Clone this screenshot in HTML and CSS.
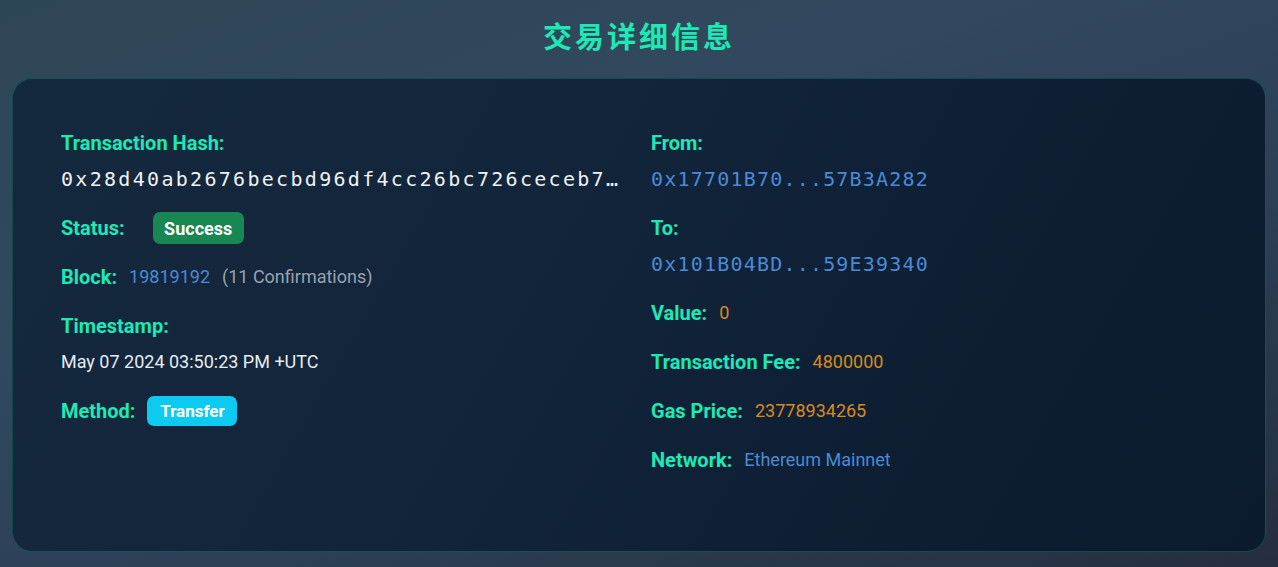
FILE: index.html
```html
<!DOCTYPE html>
<html lang="zh">
<head>
<meta charset="utf-8">
<title>交易详细信息</title>
<link rel="stylesheet" href="styles.css">
</head>
<body>
<div class="page">
  <h1 class="title">交易详细信息</h1>
  <section class="card">
    <div class="col">
      <div class="item stacked">
        <div class="label">Transaction Hash:</div>
        <div class="hash">0x28d40ab2676becbd96df4cc26bc726ceceb7c3e1a5f0d29b84e6f7a1c2d3e4f5</div>
      </div>
      <div class="item row">
        <span class="label">Status:</span>
        <span class="badge badge-success">Success</span>
      </div>
      <div class="item row">
        <span class="label">Block:</span>
        <span class="val blue">19819192</span>
        <span class="val muted">(11 Confirmations)</span>
      </div>
      <div class="item stacked">
        <div class="label">Timestamp:</div>
        <div class="val light">May 07 2024 03:50:23 PM +UTC</div>
      </div>
      <div class="item row">
        <span class="label">Method:</span>
        <span class="badge badge-info">Transfer</span>
      </div>
    </div>
    <div class="col">
      <div class="item stacked">
        <div class="label">From:</div>
        <div class="addr">0x17701B70...57B3A282</div>
      </div>
      <div class="item stacked">
        <div class="label">To:</div>
        <div class="addr">0x101B04BD...59E39340</div>
      </div>
      <div class="item row">
        <span class="label">Value:</span>
        <span class="val orange">0</span>
      </div>
      <div class="item row">
        <span class="label">Transaction Fee:</span>
        <span class="val orange">4800000</span>
      </div>
      <div class="item row">
        <span class="label">Gas Price:</span>
        <span class="val orange">23778934265</span>
      </div>
      <div class="item row">
        <span class="label">Network:</span>
        <span class="val blue">Ethereum Mainnet</span>
      </div>
    </div>
  </section>
</div>
</body>
</html>
```
FILE: styles.css
```css
* { box-sizing: border-box; }
html, body { height: 100%; }
body {
  margin: 0;
  font-family: Roboto, "Liberation Sans", sans-serif;
  background: linear-gradient(160deg, #2d4657 0%, #32485e 35%, #2b3f55 65%, #252e40 100%);
  color: #e6ecf2;
  overflow: hidden;
}
.page {
  padding: 15px 12px 0;
}
.title {
  margin: 0 0 23px;
  text-align: center;
  font-family: "Noto Sans CJK SC", sans-serif;
  font-weight: 700;
  font-size: 29px;
  line-height: 40px;
  letter-spacing: 3px;
  color: #1de9b6;
}
.card {
  display: grid;
  grid-template-columns: 1fr 1fr;
  column-gap: 24px;
  padding: 48px 48px 75px;
  border: 1px solid rgba(29, 233, 182, 0.22);
  border-radius: 20px;
  background: linear-gradient(120deg, #15293e 0%, #12243a 45%, #0d1e33 75%, #0b1b2d 100%);
}
.col {
  display: flex;
  flex-direction: column;
  gap: 17px;
  min-width: 0;
}
.item.stacked {
  display: flex;
  flex-direction: column;
  gap: 4px;
  min-width: 0;
}
.item.row {
  display: flex;
  align-items: center;
  gap: 12px;
  height: 32px;
}
.label {
  font-weight: 700;
  font-size: 20px;
  line-height: 32px;
  color: #1de9b6;
  white-space: nowrap;
}
.val {
  font-size: 18px;
  line-height: 32px;
  font-weight: 400;
  white-space: nowrap;
}
.light { color: #e6ecf2; }
.blue { color: #4a8ad6; }
.muted { color: #98a3b0; }
.orange { color: #d98a1e; }
.hash, .addr {
  font-family: "DejaVu Sans Mono", monospace;
  font-size: 20px;
  line-height: 32px;
  letter-spacing: 2.3px;
  white-space: nowrap;
}
.hash {
  color: #eef2f6;
  overflow: hidden;
  text-overflow: ellipsis;
}
.addr {
  color: #4a8ad6;
  letter-spacing: 1.2px;
}
.badge {
  display: inline-flex;
  align-items: center;
  justify-content: center;
  color: #fff;
  font-weight: 700;
  font-size: 18px;
}
.badge-success {
  margin-left: 16px;
  width: 91px;
  height: 32px;
  border-radius: 7px;
  background: #198754;
}
.badge-info {
  width: 90px;
  height: 30px;
  border-radius: 7px;
  background: #0dcaf0;
  font-size: 17px;
}
```
